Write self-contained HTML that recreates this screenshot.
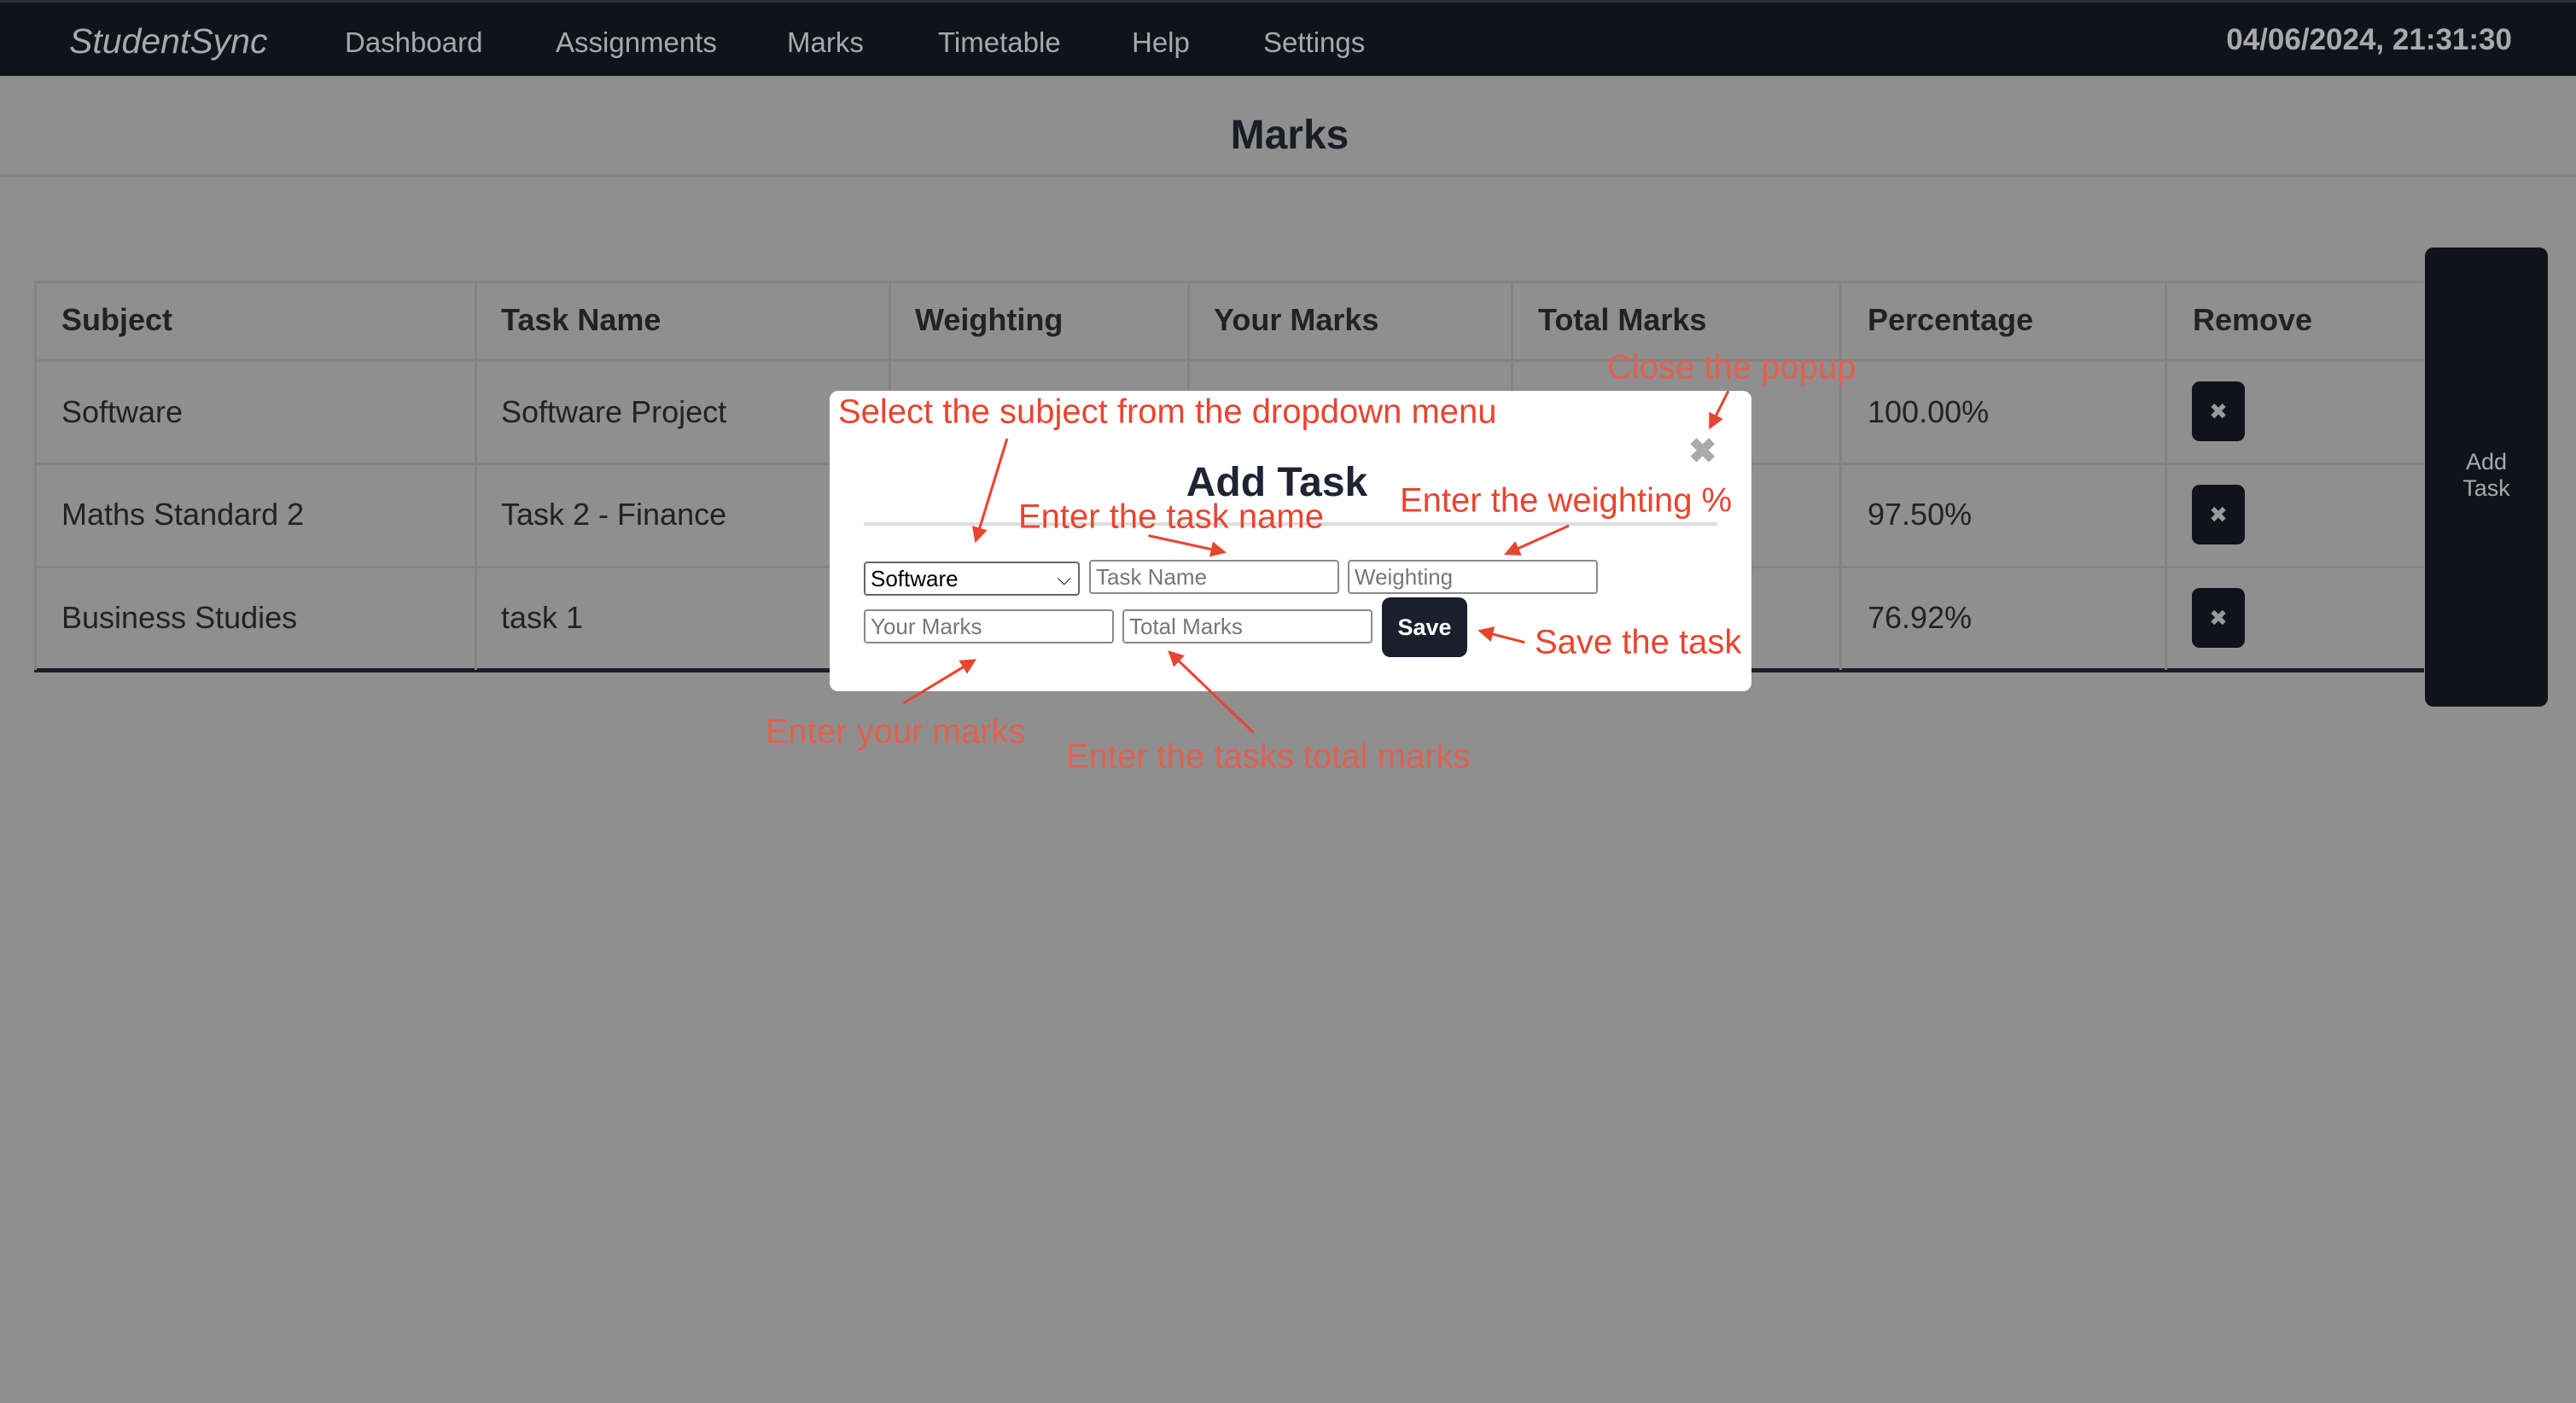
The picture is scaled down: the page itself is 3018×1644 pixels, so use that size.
<!DOCTYPE html>
<html><head><meta charset="utf-8"><style>
*{margin:0;padding:0;box-sizing:border-box}
body{width:3018px;height:1644px;background:#8f8f8f;font-family:"Liberation Sans",Arial,sans-serif;position:relative;overflow:hidden}
.a{position:absolute;white-space:nowrap}
.nav{position:absolute;left:0;top:0;width:3018px;height:89px;background:#10131b;border-top:3px solid #2e3036}
.ni{position:absolute;top:28px;font-size:33px;color:#a9a9a9}
.th{position:absolute;font-size:36px;font-weight:bold;color:#222;transform:translateY(-50%)}
.td{position:absolute;font-size:36px;color:#222;transform:translateY(-50%)}
.vl{position:absolute;top:329px;height:456px;width:3px;background:#838383}
.hl{position:absolute;left:40px;width:2800px;height:3px;background:#838383}
.rb{position:absolute;left:2568px;width:62px;height:70px;background:#10131b;border-radius:9px;color:#999;font-size:26px;text-align:center;line-height:70px}
.in{position:absolute;height:40px;border:2px solid #8a8a8a;border-radius:4px;background:#fff;font-size:26px;color:#777;padding-left:6px;line-height:36px}
.r{position:absolute;font-size:40px;color:#e8452f;white-space:nowrap;transform:translateY(-50%)}
</style></head><body>
<div class="nav">
<div class="a" style="left:81px;top:22px;font-size:41px;font-style:italic;color:#a9a9a9">StudentSync</div>
<div class="ni" style="left:404px">Dashboard</div>
<div class="ni" style="left:651px">Assignments</div>
<div class="ni" style="left:922px">Marks</div>
<div class="ni" style="left:1099px">Timetable</div>
<div class="ni" style="left:1326px">Help</div>
<div class="ni" style="left:1480px">Settings</div>
<div class="a" style="right:75px;top:24px;font-size:35px;font-weight:bold;color:#a9a9a9">04/06/2024, 21:31:30</div>
</div>
<div class="a" style="left:0;top:204px;width:3018px;height:3px;background:#838383"></div>
<div class="a" style="left:0;top:131px;width:3018px;text-align:center;font-size:48px;font-weight:bold;color:#1a1d26;padding-left:4px">Marks</div>

<div class="hl" style="top:329px"></div>
<div class="hl" style="top:421px"></div>
<div class="hl" style="top:542px"></div>
<div class="hl" style="top:663px"></div>
<div class="a" style="left:40px;top:783px;width:2800px;height:5px;background:#1c1f28"></div>
<div class="vl" style="left:40px"></div>
<div class="vl" style="left:556px"></div>
<div class="vl" style="left:1041px"></div>
<div class="vl" style="left:1391px"></div>
<div class="vl" style="left:1770px"></div>
<div class="vl" style="left:2155px"></div>
<div class="vl" style="left:2536px"></div>

<div class="th" style="left:72px;top:375px">Subject</div>
<div class="th" style="left:587px;top:375px">Task Name</div>
<div class="th" style="left:1072px;top:375px">Weighting</div>
<div class="th" style="left:1422px;top:375px">Your Marks</div>
<div class="th" style="left:1802px;top:375px">Total Marks</div>
<div class="th" style="left:2188px;top:375px">Percentage</div>
<div class="th" style="left:2569px;top:375px">Remove</div>

<div class="td" style="left:72px;top:483px">Software</div>
<div class="td" style="left:587px;top:483px">Software Project</div>
<div class="td" style="left:2188px;top:483px">100.00%</div>
<div class="td" style="left:72px;top:603px">Maths Standard 2</div>
<div class="td" style="left:587px;top:603px">Task 2 - Finance</div>
<div class="td" style="left:2188px;top:603px">97.50%</div>
<div class="td" style="left:72px;top:724px">Business Studies</div>
<div class="td" style="left:587px;top:724px">task 1</div>
<div class="td" style="left:2188px;top:724px">76.92%</div>
<div class="rb" style="top:447px">✖</div>
<div class="rb" style="top:568px">✖</div>
<div class="rb" style="top:689px">✖</div>

<div class="a" style="left:2841px;top:290px;width:144px;height:538px;background:#10131b;border-radius:10px;color:#aaa;font-size:27px;text-align:center;padding-top:236px;white-space:normal;line-height:31px">Add<br>Task</div>

<div class="a" style="left:972px;top:458px;width:1080px;height:352px;background:#fff;border-radius:10px"></div>
<div class="a" style="left:1978px;top:506px;font-size:40px;color:#aaa;font-weight:bold">✖</div>
<div class="a" style="left:0;top:538px;width:2992px;text-align:center;font-size:48px;font-weight:bold;color:#1f2433">Add Task</div>
<div class="a" style="left:1012px;top:612px;width:1000px;height:4px;background:#ddd"></div>
<div class="in" style="left:1012px;top:658px;width:253px;color:#000;border-color:#666">Software<span style="position:absolute;right:8px;top:0;font-size:22px">⌵</span></div>
<div class="in" style="left:1276px;top:656px;width:293px">Task Name</div>
<div class="in" style="left:1579px;top:656px;width:293px">Weighting</div>
<div class="in" style="left:1012px;top:714px;width:293px">Your Marks</div>
<div class="in" style="left:1315px;top:714px;width:293px">Total Marks</div>
<div class="a" style="left:1619px;top:700px;width:100px;height:70px;background:#1b1f2b;border-radius:10px;color:#fff;font-size:27px;font-weight:bold;text-align:center;line-height:70px">Save</div>

<div class="r" style="left:982px;top:483px">Select the subject from the dropdown menu</div>
<div class="r" style="left:1883px;top:431px;color:#e2604f">Close the popup</div>
<div class="r" style="left:1193px;top:606px">Enter the task name</div>
<div class="r" style="left:1640px;top:587px">Enter the weighting %</div>
<div class="r" style="left:1798px;top:753px">Save the task</div>
<div class="r" style="left:897px;top:858px;color:#e2604f">Enter your marks</div>
<div class="r" style="left:1249px;top:887px;color:#e2604f">Enter the tasks total marks</div>

<svg class="a" style="left:0;top:0" width="3018" height="1644" viewBox="0 0 1568 854" preserveAspectRatio="none">
<defs><marker id="m" markerWidth="6" markerHeight="6" refX="5" refY="3" orient="auto" markerUnits="strokeWidth"><path d="M0,0 L6,3 L0,6 z" fill="#e8452f"/></marker></defs>
<g stroke="#e8452f" stroke-width="1.6" fill="none" marker-end="url(#m)">
<line x1="613" y1="267" x2="594" y2="329"/>
<line x1="1052" y1="238" x2="1041" y2="260"/>
<line x1="699" y1="326" x2="745" y2="336"/>
<line x1="955" y1="320" x2="917" y2="337"/>
<line x1="928" y1="391" x2="901" y2="384"/>
<line x1="550" y1="428" x2="593" y2="402"/>
<line x1="763" y1="446" x2="712" y2="397"/>
</g></svg>
</body></html>
